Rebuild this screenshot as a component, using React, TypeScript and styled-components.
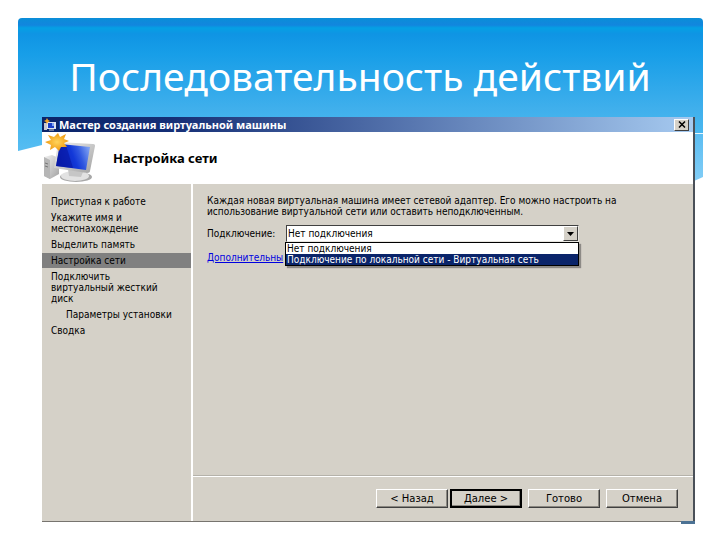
import React, { useState } from "react";
import styled, { createGlobalStyle } from "styled-components";

const GlobalStyle = createGlobalStyle`
  *, *::before, *::after { box-sizing: border-box; }
  body { margin: 0; background: #fff; }
`;

const face = "#d5d1c8";
const uiFont = '"DejaVu Sans Condensed", "DejaVu Sans", sans-serif';

const Slide = styled.main`
  display: grid;
  grid-template: minmax(100vh, auto) / minmax(0, 1fr);
  font: 10px/11px ${uiFont};
  color: #000;
`;

const Banner = styled.div`
  grid-area: 1 / 1;
  height: 163px;
  margin: 18px 17px 0 18px;
  border-radius: 4px;
  background:
    linear-gradient(#e8f6fe 0, #e8f6fe 1px, #5bbdf2 1px, #82cdf6 48px) right 115px / 10px 48px no-repeat,
    linear-gradient(#0a8ed8 0, #1286de 7px, #05a0e4 10px, #0f94e4 16px, #179ee8 36px, #3fafec 90px, #4ab8f0 115px, #6cc6f6 163px);
  clip-path: polygon(0 0, 100% 0, 100% 159px, calc(100% - 9px) 163px, 60px 118px, 0 133px);
`;

const Content = styled.div`
  grid-area: 1 / 1;
  z-index: 1;
  display: flex;
  flex-direction: column;
  padding: 44px 25px 18px 42px;
`;

const Title = styled.h1`
  margin: 0 0 9px;
  padding-right: 17px;
  height: 64px;
  font: 400 39px/64px "Noto Sans", sans-serif;
  color: #fff;
  text-align: center;
  white-space: nowrap;
`;

const Window = styled.section`
  position: relative;
  flex: 1;
  display: flex;
  flex-direction: column;
  background: ${face};
  border-right: 2px solid #4a5058;
  border-bottom: 1px solid #77746f;

  &::after {
    content: "";
    position: absolute;
    top: 100%;
    right: -2px;
    width: 14px;
    height: 3px;
    background: #4c7294;
  }
`;

const TitleBar = styled.header`
  display: flex;
  align-items: center;
  gap: 3px;
  height: 15px;
  padding: 0 4px 0 2px;
  background: linear-gradient(90deg, #0a246a, #152f76 20%, #5877b0 57%, #a6caf0);
  color: #fff;
  font: 700 11px/15px "Noto Sans", sans-serif;
`;

const WindowName = styled.span`
  flex: 1;
`;

const CloseButton = styled.button`
  display: grid;
  place-items: center;
  width: 15px;
  height: 12px;
  padding: 0;
  border: 1px solid;
  border-color: #fff #404040 #404040 #fff;
  background: ${face};
`;

const PageHead = styled.div`
  display: flex;
  align-items: center;
  gap: 16px;
  height: 52px;
  padding-left: 1px;
  background: #fff;
`;

const PageTitle = styled.h2`
  margin: 0;
  font: 700 13px/20px "Noto Sans", sans-serif;
`;

const Body = styled.div`
  flex: 1;
  display: flex;
`;

const Steps = styled.nav`
  width: 151px;
  flex: none;
  padding-top: 10px;
  border-right: 2px solid #fff;
`;

const StepList = styled.ol`
  display: flex;
  flex-direction: column;
  gap: 1px;
  margin: 0;
  padding: 0;
  list-style: none;
`;

const Step = styled.li<{ $current?: boolean; $nested?: boolean }>`
  padding: 2px 9px 2px ${(p) => (p.$nested ? 24 : 9)}px;
  background: ${(p) => (p.$current ? "#808080" : "transparent")};
  white-space: pre-line;
`;

const Pane = styled.div`
  flex: 1;
  min-width: 0;
  display: flex;
  flex-direction: column;
`;

const Form = styled.div`
  flex: 1;
  padding: 11px 14px;
`;

const Intro = styled.p`
  margin: 0 0 8px;
  white-space: pre-line;
`;

const Field = styled.div`
  display: flex;
  align-items: center;
  padding-right: 100px;
`;

const Label = styled.label`
  width: 79px;
  flex: none;
`;

const Combo = styled.div`
  position: relative;
  flex: 1;
`;

const Select = styled.select`
  appearance: none;
  display: block;
  width: 100%;
  height: 17px;
  padding: 0 18px 0 1px;
  border: 1px solid;
  border-color: #404040 #e8e6e0 #e8e6e0 #404040;
  border-radius: 0;
  background: #fff;
  color: #000;
  font: 10px/15px ${uiFont};
`;

const Arrow = styled.span`
  position: absolute;
  top: 1px;
  right: 1px;
  display: grid;
  place-items: center;
  width: 15px;
  height: 15px;
  border: 1px solid;
  border-color: #fff #404040 #404040 #fff;
  background: ${face};
  pointer-events: none;
`;

const Options = styled.ul`
  position: absolute;
  top: 100%;
  left: -1px;
  right: 0;
  margin: 0;
  padding: 0;
  border: 1px solid #000;
  background: #fff;
  box-shadow: 2px 2px 1px #8d8a86;
  list-style: none;
`;

const Option = styled.li<{ $selected?: boolean }>`
  padding-left: 1px;
  line-height: 11px;
  white-space: nowrap;
  background: ${(p) => (p.$selected ? "#0a246a" : "#fff")};
  color: ${(p) => (p.$selected ? "#fff" : "#000")};
`;

const MoreLink = styled.a`
  display: inline-block;
  margin-top: 10px;
  color: #0000e0;
  white-space: nowrap;
`;

const Footer = styled.footer`
  display: flex;
  justify-content: flex-end;
  gap: 6px;
  padding: 12px 15px 13px;
  border-top: 1px solid #fff;
  box-shadow: 0 -1px #b5b2aa;
`;

const Button = styled.button<{ $primary?: boolean }>`
  width: 72px;
  height: 19px;
  padding: 0;
  border: ${(p) => (p.$primary ? "2px" : "1px")} solid;
  border-color: ${(p) => (p.$primary ? "#000" : "#fff #404040 #404040 #fff")};
  box-shadow: inset -1px -1px #8a8780;
  background: ${face};
  color: #000;
  font: 10px/11px "DejaVu Sans", sans-serif;
`;

const StepButtons = styled.div`
  display: flex;
  gap: 2px;
`;

const SmallComputer = () => (
  <svg width="12" height="13" viewBox="0 0 12 13" aria-hidden="true">
    <path d="M0 5h3v7H0z" fill="#c9c9ce" />
    <path d="M3 4h9v7H3z" fill="#dfe4ee" />
    <path d="M4 5h6v5H4z" fill="#1a3fc8" />
    <path d="M8 5h2v3H8z" fill="#7fa4f0" />
    <path d="M5 12h5" stroke="#d0d0d0" />
    <path d="M3 0l1 2 2 1-2 1-1 2-1-2-2-1 2-1z" fill="#f5a623" />
  </svg>
);

const Computer = () => (
  <svg width="54" height="50" viewBox="0 0 54 50" aria-hidden="true">
    <defs>
      <linearGradient id="screen" x1="0" y1="0.6" x2="1" y2="0.3">
        <stop offset="0" stopColor="#0a1fae" />
        <stop offset="0.5" stopColor="#1238d8" />
        <stop offset="0.7" stopColor="#3058e0" />
        <stop offset="1" stopColor="#7c9ff2" />
      </linearGradient>
      <linearGradient id="metal" x1="0" y1="0" x2="1" y2="1">
        <stop offset="0" stopColor="#f2f2f2" />
        <stop offset="1" stopColor="#a2a2a2" />
      </linearGradient>
      <radialGradient id="star">
        <stop offset="0" stopColor="#ffd45c" />
        <stop offset="1" stopColor="#f09a10" />
      </radialGradient>
    </defs>
    <path d="M1 24l8-2 7 3v16l-9 5-6-3z" fill="url(#metal)" />
    <path d="M1 24l6 3v19l-6-3z" fill="#b6b6b6" />
    <path d="M2 30l3 1M2 33l3 1" stroke="#777" />
    <ellipse cx="33" cy="44" rx="16" ry="5" fill="#a8a8a8" />
    <ellipse cx="32" cy="43" rx="14" ry="5" fill="#e2e2e2" />
    <path d="M25 36l15 3-2 5-12-1z" fill="#c6c6c6" />
    <path d="M15 9l35 2c2 0 2 1 2 2l-5 25c0 1-1 2-3 2L11 35z" fill="url(#metal)" />
    <path d="M17 11l30 3-4 23-30-4z" fill="url(#screen)" />
    <path d="M17 11l6 1 7 23-17-2z" fill="#0716a2" opacity="0.6" />
    <path d="M15 0l2 4 6-3-2 5 5 2-5 2 3 4-6 0-2 4-4-4-5 3 1-5-6-3 6-2-3-5 6 2z" fill="url(#star)" />
  </svg>
);

const steps = [
  { text: "Приступая к работе" },
  { text: "Укажите имя и\nместонахождение" },
  { text: "Выделить память" },
  { text: "Настройка сети", current: true },
  { text: "Подключить\nвиртуальный жесткий\nдиск" },
  { text: "Параметры установки", nested: true },
  { text: "Сводка" },
];

const connections = ["Нет подключения", "Подключение по локальной сети - Виртуальная сеть"];

export default function App() {
  const [connection, setConnection] = useState(connections[0]);

  return (
    <Slide>
      <GlobalStyle />
      <Banner />
      <Content>
        <Title>Последовательность действий</Title>
        <Window aria-label="Мастер создания виртуальной машины">
          <TitleBar>
            <SmallComputer />
            <WindowName>Мастер создания виртуальной машины</WindowName>
            <CloseButton type="button" aria-label="Закрыть">
              <svg width="8" height="7" viewBox="0 0 8 7" aria-hidden="true">
                <path d="M1 .5l6 6M7 .5l-6 6" stroke="#000" strokeWidth="1.5" />
              </svg>
            </CloseButton>
          </TitleBar>
          <PageHead>
            <Computer />
            <PageTitle>Настройка сети</PageTitle>
          </PageHead>
          <Body>
            <Steps>
              <StepList>
                {steps.map((s) => (
                  <Step key={s.text} $current={s.current} $nested={s.nested} aria-current={s.current ? "step" : undefined}>
                    {s.text}
                  </Step>
                ))}
              </StepList>
            </Steps>
            <Pane>
              <Form>
                <Intro>
                  {"Каждая новая виртуальная машина имеет сетевой адаптер. Его можно настроить на\nиспользование виртуальной сети или оставить неподключенным."}
                </Intro>
                <Field>
                  <Label htmlFor="connection">Подключение:</Label>
                  <Combo>
                    <Select id="connection" value={connection} onChange={(e) => setConnection(e.target.value)}>
                      {connections.map((c) => (
                        <option key={c}>{c}</option>
                      ))}
                    </Select>
                    <Arrow>
                      <svg width="7" height="4" viewBox="0 0 7 4" aria-hidden="true">
                        <path d="M0 0h7L3.500 4z" />
                      </svg>
                    </Arrow>
                    <Options role="listbox" aria-label="Подключение">
                      {connections.map((c, i) => (
                        <Option key={c} role="option" aria-selected={i === 1} $selected={i === 1} onClick={() => setConnection(c)}>
                          {c}
                        </Option>
                      ))}
                    </Options>
                  </Combo>
                </Field>
                <MoreLink href="#more">Дополнительны</MoreLink>
              </Form>
              <Footer>
                <StepButtons>
                  <Button type="button">&lt; Назад</Button>
                  <Button type="button" $primary>Далее &gt;</Button>
                </StepButtons>
                <Button type="button">Готово</Button>
                <Button type="button">Отмена</Button>
              </Footer>
            </Pane>
          </Body>
        </Window>
      </Content>
    </Slide>
  );
}
